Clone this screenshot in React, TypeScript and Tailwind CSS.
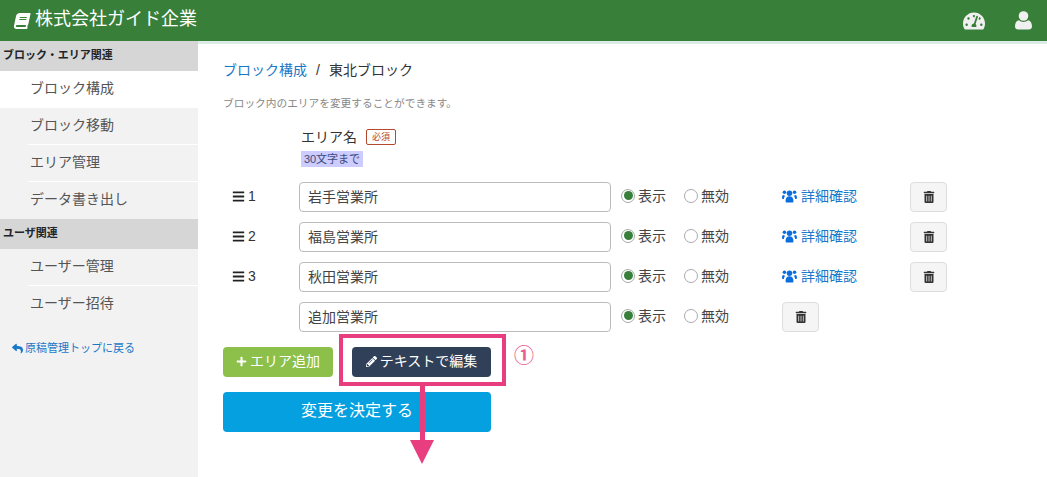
import { FaBars, FaBook, FaPencilAlt, FaPlus, FaReply, FaTachometerAlt, FaTrashAlt } from "react-icons/fa";

const font = { fontFamily: '"Liberation Sans", "Noto Sans CJK JP", sans-serif' };

const rows = [
  { no: "1", name: "岩手営業所" },
  { no: "2", name: "福島営業所" },
  { no: "3", name: "秋田営業所" },
  { no: "", name: "追加営業所" },
];

function UsersIcon() {
  return (
    <svg viewBox="0 0 16 14" className="w-[15px] h-[14px] mr-[4px] fill-[#0a6fdc]">
      <circle cx="8" cy="4" r="2.9" />
      <circle cx="2.6" cy="3" r="1.9" />
      <circle cx="13.4" cy="3" r="1.9" />
      <path d="M3.8 12.6c0-3.8 1.5-5.3 4.2-5.3s4.2 1.5 4.2 5.3c0 .8-.6 1.4-1.2 1.4H5c-.6 0-1.2-.6-1.2-1.4z" />
      <path d="M0 9.2c0-2 .6-3.2 1.5-3.2.6.5 1.3.8 2 .8-1 1-1.4 2.4-1.5 3.4H1c-.6 0-1-.4-1-1z" />
      <path d="M16 9.2c0-2-.6-3.2-1.5-3.2-.6.5-1.3.8-2 .8 1 1 1.4 2.4 1.5 3.4h1c.6 0 1-.4 1-1z" />
    </svg>
  );
}

function UserIcon() {
  return (
    <svg viewBox="0 0 17 19" className="ml-[30px] w-[17px] h-[19px] fill-[#f0f0f0]">
      <circle cx="8.5" cy="5" r="4.8" />
      <path d="M0 15.5C0 11.5 1.8 9.5 4 9.2 5.2 10.3 6.8 10.9 8.5 10.9S11.8 10.3 13 9.2C15.2 9.5 17 11.5 17 15.5 17 17.5 15.5 18.5 13.8 18.5H3.2C1.5 18.5 0 17.5 0 15.5Z" />
    </svg>
  );
}

function SideHead({ label }: { label: string }) {
  return (
    <div className="h-[30px] bg-[#d6d6d6] pl-[3px] pb-[1px] flex items-center text-[11px] font-bold text-[#212529]">
      {label}
    </div>
  );
}

function SideItem({ label, active, last }: { label: string; active?: boolean; last?: boolean }) {
  if (active) {
    return <div className="h-[37px] bg-white pl-[30px] pb-[3px] flex items-center text-sm text-[#555]">{label}</div>;
  }
  return (
    <div className={`h-[37px] ml-[28px] pl-[2px] pb-[3px] flex items-center text-sm text-[#555] ${last ? "" : "border-b border-white"}`}>
      {label}
    </div>
  );
}

function Radio({ checked, label }: { checked?: boolean; label: string }) {
  return (
    <div className="flex items-center pb-[3px] text-sm text-[#444]">
      <span className="w-[14px] h-[14px] rounded-full border border-[#aaa] bg-white flex items-center justify-center">
        {checked && <span className="w-[9px] h-[9px] rounded-full bg-[#38803a]" />}
      </span>
      <span className="ml-[3px]">{label}</span>
    </div>
  );
}

function TrashButton() {
  return (
    <button className="w-[37px] h-[30px] rounded border border-[#ddd] bg-[#f5f5f5] flex items-center justify-center text-[#333]">
      <FaTrashAlt className="text-[12px]" />
    </button>
  );
}

export default function App() {
  return (
    <div className="w-[1047px] h-[477px] overflow-hidden bg-white relative flex flex-col" style={font}>
      <header className="h-[41px] shrink-0 bg-[#38803a] text-white flex items-center pl-[14px] pr-[15px]">
        <FaBook className="text-[16px] -skew-x-12" />
        <span className="ml-[5px] pb-[2px] text-[18px]">株式会社ガイド企業</span>
        <FaTachometerAlt className="ml-auto text-[22px] text-[#f0f0f0]" />
        <UserIcon />
      </header>

      <div className="flex-1 flex min-h-0">
        <aside className="w-[198px] shrink-0 bg-[#f2f2f2]">
          <SideHead label="ブロック・エリア関連" />
          <SideItem label="ブロック構成" active />
          <SideItem label="ブロック移動" />
          <SideItem label="エリア管理" />
          <SideItem label="データ書き出し" last />
          <SideHead label="ユーザ関連" />
          <SideItem label="ユーザー管理" />
          <SideItem label="ユーザー招待" last />
          <div className="mt-[17px] pl-[12px] flex items-center text-[11px] text-[#1a78c8]">
            <FaReply className="text-[11px] mr-[2px]" />
            原稿管理トップに戻る
          </div>
        </aside>

        <main className="flex-1 border-t-[3px] border-[#dcece6] pl-[25px]">
          <div className="mt-[16px] h-[20px] flex items-center text-sm text-[#333]">
            <span className="text-[#1a78c8]">ブロック構成</span>
            <span className="mx-[9px]">/</span>
            <span>東北ブロック</span>
          </div>
          <p className="mt-[16px] h-[14px] leading-[14px] text-[10.7px] text-[#888]">ブロック内のエリアを変更することができます。</p>

          <div className="ml-[78px] mt-[17px] h-[20px] flex items-center text-sm text-[#333]">
            エリア名
            <span className="ml-[9px] w-[30px] h-[16px] rounded-[2px] border border-[#b5482f] text-[#b5482f] text-[9px] flex items-center justify-center">
              必須
            </span>
          </div>
          <div className="ml-[78px] mt-[4px] w-[62px] h-[16px] bg-[#ccccff] text-[11px] text-[#3b4a7a] flex items-center justify-center">
            30文字まで
          </div>

          <div className="mt-[15px] flex flex-col gap-[10px]">
            {rows.map((r) => (
              <div key={r.name} className="h-[30px] flex items-center">
                <div className="w-[76px] pl-[9px] pb-[2px] flex items-center text-sm text-[#333]">
                  {r.no && (
                    <>
                      <FaBars className="text-[13px] text-[#222] mr-[3px]" />
                      {r.no}
                    </>
                  )}
                </div>
                <div className="w-[312px] h-[30px] rounded border border-[#bbb] flex items-center pl-[8px] pb-[1px] text-sm text-[#444]">
                  {r.name}
                </div>
                <div className="ml-[10px] w-[63px]">
                  <Radio checked label="表示" />
                </div>
                <div className="w-[98px]">
                  <Radio label="無効" />
                </div>
                {r.no ? (
                  <>
                    <div className="w-[128px] pb-[3px] flex items-center text-sm text-[#1a78c8]">
                      <UsersIcon />
                      詳細確認
                    </div>
                    <TrashButton />
                  </>
                ) : (
                  <TrashButton />
                )}
              </div>
            ))}
          </div>

          <div className="mt-[15px] flex">
            <button className="w-[110px] h-[30px] pb-[2px] rounded bg-[#8cc04b] text-white text-sm flex items-center justify-center">
              <FaPlus className="text-[11px] mr-[3px]" />
              エリア追加
            </button>
            <button className="ml-[19px] w-[139px] h-[30px] pb-[2px] rounded bg-[#2f4058] text-white text-sm flex items-center justify-center">
              <FaPencilAlt className="text-[11px] mr-[3px]" />
              テキストで編集
            </button>
          </div>
          <button className="mt-[15px] w-[268px] h-[40px] pb-[2px] rounded bg-[#05a0e0] text-white text-base flex items-center justify-center">
            変更を決定する
          </button>
        </main>
      </div>

      {/* annotation over the page */}
      <div className="absolute left-[339px] top-[334px] w-[167px] h-[52px] border-[4px] border-[#e83e80]" />
      <div className="absolute left-[420px] top-[386px] w-[5px] h-[55px] bg-[#e83e80]" />
      <div className="absolute left-[410px] top-[440px] w-0 h-0 border-x-[12.5px] border-x-transparent border-t-[24px] border-t-[#e83e80]" />
      <div className="absolute left-[514px] top-[344px] text-[20px] leading-[24px] font-bold text-[#e8608f]">①</div>
    </div>
  );
}
